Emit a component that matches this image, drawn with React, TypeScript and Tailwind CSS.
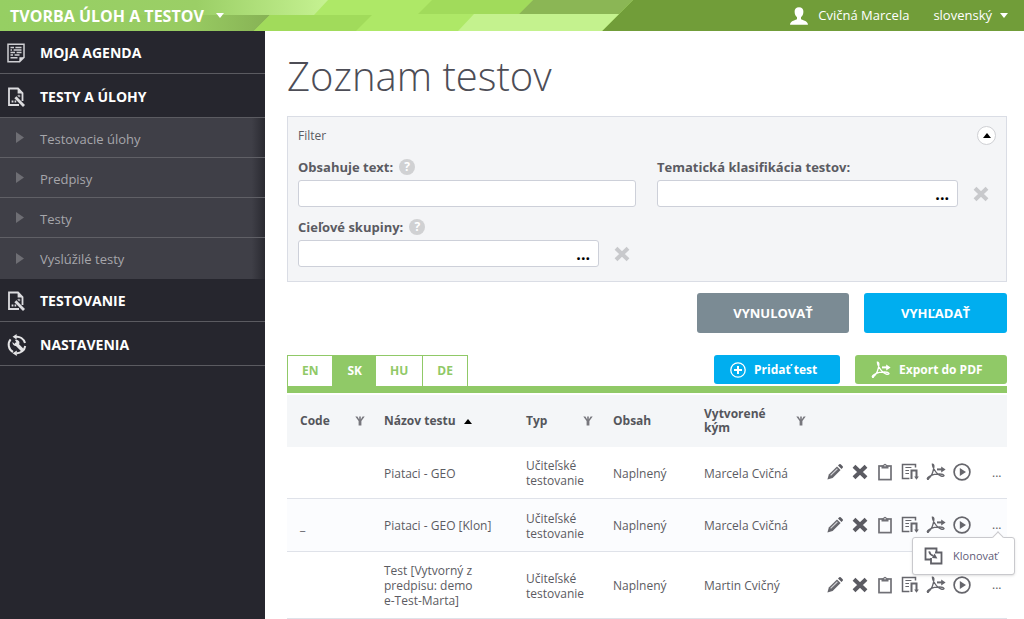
import type { ReactNode } from 'react';

type IconProps = { className?: string };

const PencilIcon = () => (
  <svg viewBox="0 0 18 18" className="size-[18px]" fill="none">
    <path d="M1.4 16.6 L2.8 11.4 L11 3.4 L14.6 7 L6.6 15 Z" fill="#66666c" />
    <path d="M4.6 12.4 L11.4 5.8" stroke="#d0d0d4" strokeWidth="1.2" />
    <path d="M12 2.5 L13.3 1.2 Q14 0.7 14.7 1.3 L16.7 3.3 Q17.3 4 16.7 4.7 L15.5 6 Z" fill="#5b5b62" />
  </svg>
);

const CrossIcon = ({ className }: IconProps) => (
  <svg viewBox="0 0 18 18" className={className} fill="none" stroke="currentColor" strokeWidth="4">
    <path d="M3 3.2 L15 14.8 M15 3.2 L3 14.8" />
  </svg>
);

const ClipboardIcon = () => (
  <svg viewBox="0 0 18 18" className="size-[18px]" fill="none" stroke="#707076">
    <rect x="3" y="3" width="12" height="13.6" strokeWidth="1.7" />
    <path d="M5.5 2.5 H7.2 Q7.4 0.8 9 0.8 Q10.6 0.8 10.8 2.5 H12.5 V5.6 H5.5 Z" fill="#707076" stroke="none" />
    <circle cx="9" cy="2.7" r="0.7" fill="#fff" stroke="none" />
  </svg>
);

const ReportIcon = () => (
  <svg viewBox="0 0 18 18" className="size-[18px]" fill="none" stroke="#66666c" strokeWidth="1.5">
    <path d="M8.4 15.5 H1.5 V1.5 H14.5 V4.6" />
    <path d="M4.4 4.5 H10.4 M4.4 7.5 H8 M4.4 10.5 H8" strokeWidth="1.2" />
    <path d="M10.5 16 V7.5 H15.5 V14.6" strokeWidth="2" />
    <path d="M13.2 13.4 L15.5 16.8 L17.8 13.4 Z" fill="#66666c" stroke="none" />
  </svg>
);

const PdfIcon = ({ className }: IconProps) => (
  <svg viewBox="0 0 20 18" className={className} fill="none" stroke="currentColor" strokeWidth="1.3">
    <path d="M6.4 1.2 C8.6 1 7.8 4.6 7.5 6.5 C6.6 10.4 4.2 14.8 1.6 16.2 C0.6 15 3.6 12.4 8.4 11.4 C12.8 10.6 17.4 11 18 12.6 C17 14.4 12.8 12.6 10.4 9.6 C8.4 7 6.4 3.4 6.4 1.2 Z" />
    <circle cx="2" cy="15.8" r="1.2" fill="currentColor" stroke="none" />
    <path d="M11 6.4 H16" strokeWidth="2" />
    <path d="M15.2 3.4 L19.6 6.4 L15.2 9.4 Z" fill="currentColor" stroke="none" />
  </svg>
);

const PlayIcon = () => (
  <svg viewBox="0 0 18 18" className="size-[18px]" fill="none">
    <circle cx="9" cy="9" r="7.9" stroke="#66666c" strokeWidth="1.7" />
    <path d="M6.8 5 L13 9 L6.8 13 Z" fill="#66666c" />
  </svg>
);

const CloneIcon = () => (
  <svg viewBox="0 0 19 18" className="h-[18px] w-[19px] shrink-0" fill="none" stroke="#606067" strokeWidth="1.8">
    <path d="M7 12.5 H1.5 V1.5 H12.5 V5" />
    <path d="M11 5.5 H17.5 V16.5 H7 V11" />
    <path d="M5.2 4.4 Q5.8 7.8 9.4 8.8" strokeWidth="1.8" />
    <path d="M10.6 6.6 L13.4 11.4 L8 11 Z" fill="#606067" stroke="none" />
  </svg>
);

const FunnelIcon = () => (
  <svg viewBox="0 0 10 10" className="size-2.5 shrink-0" fill="none">
    <path d="M0.3 0.5 L3.6 5 V9.6 H6.4 V5 L9.7 0.5 H7.6 L5.8 3.4 V0.5 H4.2 V3.4 L2.4 0.5 Z" fill="#77777d" />
  </svg>
);

const AgendaIcon = () => (
  <svg viewBox="0 0 18 20" className="h-5 w-[18px]" fill="none" stroke="#cfcfd3">
    <path d="M1 1.2 H17 V14.4 L12.6 18.8 H1 Z" strokeWidth="1.5" />
    <path d="M17 14.2 H12.4 V18.8 Z" fill="#dcdcdf" stroke="none" />
    <path d="M3.5 4.5 H7 M8.4 4.5 H14.5 M3.5 7 H5 M6.6 7 H14.5 M3.5 9.6 H8 M9.6 9.6 H14.5 M3.5 12.1 H6 M7.6 12.1 H12.5 M3.5 14.8 H10.5" strokeWidth="1.5" />
  </svg>
);

const TestIcon = () => (
  <svg viewBox="0 0 18 20" className="h-5 w-[18px]" fill="none" stroke="#dcdcdf">
    <path d="M12 18 H2 V1.5 H11 L15.5 6 V14" strokeWidth="1.8" />
    <path d="M10.6 1 L16 6.6 H10.6 Z" fill="#dcdcdf" stroke="none" />
    <path d="M8.4 10.2 L17 19" strokeWidth="2.8" />
    <path d="M10.2 8.8 L12 7.4 L13.6 9 L12.2 10.6 Z" fill="#a9a9ae" stroke="none" />
    <path d="M4.6 14.6 H6.4 M7.6 14.6 H9.2" strokeWidth="2" />
  </svg>
);

const SettingsIcon = () => (
  <svg viewBox="0 0 20 22" className="h-[22px] w-5" fill="none" stroke="#e4e4e6" strokeWidth="2">
    <path d="M6 18 A8.3 8.3 0 0 1 3.6 5.4" />
    <path d="M8.4 2.8 A8.3 8.3 0 0 1 18 9" />
    <path d="M18.2 12 A8.3 8.3 0 0 1 9.4 19.2" />
    <path d="M9.6 0 V5.6 L5.6 2.8 Z M9.8 16.4 V22 L5.6 19.2 Z" fill="#e4e4e6" stroke="none" />
    <path d="M14.6 15.2 L9.4 10" strokeWidth="3.4" strokeLinecap="round" />
    <path d="M5.4 8 L7.8 10 L9.6 8.4 L7.8 5.8 C11.6 5.2 13.4 8 12 10.6 C9.8 13.2 5.4 12.2 5.4 8 Z" fill="#e4e4e6" stroke="none" />
  </svg>
);

const UserIcon = () => (
  <svg viewBox="0 0 18 18" className="size-[18px]" fill="#fff">
    <path d="M9 0.2 C6.2 0.2 4.4 2 4.6 4.8 C4.7 7.6 5.8 9.2 7 10.2 V12 C6.4 13.4 0.2 13.2 0 17.8 H18 C17.8 13.2 11.6 13.4 11 12 V10.2 C12.2 9.2 13.3 7.6 13.4 4.8 C13.6 2 11.8 0.2 9 0.2 Z" />
  </svg>
);

const CaretDown = () => (
  <svg viewBox="0 0 8 5" className="h-[5px] w-2 shrink-0" fill="#fff">
    <path d="M0 0 H8 L4 5 Z" />
  </svg>
);

const CaretUp = () => (
  <svg viewBox="0 0 8 5" className="h-[5px] w-2 shrink-0" fill="#000">
    <path d="M0 5 H8 L4 0 Z" />
  </svg>
);

const HelpIcon = () => (
  <span className="flex size-4 items-center justify-center rounded-full bg-[#d0d1d3] text-xs leading-4 font-bold text-white">?</span>
);

const submenu = ['Testovacie úlohy', 'Predpisy', 'Testy', 'Vyslúžilé testy'];

const languages = ['EN', 'SK', 'HU', 'DE'];

const tests = [
  { id: 1, code: '', name: 'Piataci - GEO', author: 'Marcela Cvičná', height: 'h-[51px]', bg: 'bg-white', menu: false },
  { id: 2, code: '_', name: 'Piataci - GEO [Klon]', author: 'Marcela Cvičná', height: 'h-[53px]', bg: 'bg-[#fbfcfe]', menu: true },
  { id: 3, code: '', name: 'Test [Vytvorný z\npredpisu: demo\ne-Test-Marta]', author: 'Martin Cvičný', height: 'h-[67px]', bg: 'bg-white', menu: false },
];

const actions = [
  { label: 'Upraviť', icon: <PencilIcon /> },
  { label: 'Zmazať', icon: <CrossIcon className="size-[18px] text-[#5b5b62]" /> },
  { label: 'Zadanie', icon: <ClipboardIcon /> },
  { label: 'Detail', icon: <ReportIcon /> },
  { label: 'Export do PDF', icon: <PdfIcon className="h-[18px] w-5 text-[#66666c]" /> },
  { label: 'Spustiť', icon: <PlayIcon /> },
];

function Header() {
  return (
    <header className="relative flex h-[31px] items-center justify-between bg-[#719d39] pr-4 pl-2.5 text-white">
      <svg viewBox="0 0 634 31" className="absolute top-0 left-0 h-[31px] w-[634px]" aria-hidden="true">
        <defs>
          <linearGradient id="top" x1="0" x2="1" y1="0" y2="0">
            <stop offset="0" stopColor="#96cf63" />
            <stop offset="0.6" stopColor="#9bcf66" />
            <stop offset="1" stopColor="#c6f292" />
          </linearGradient>
          <linearGradient id="bottom" x1="0" x2="1" y1="0" y2="0">
            <stop offset="0" stopColor="#96cf63" />
            <stop offset="0.7" stopColor="#98cb62" />
            <stop offset="1" stopColor="#87b255" />
          </linearGradient>
        </defs>
        <path d="M0 0 H633 L602 31 H0 Z" fill="#aee867" />
        <path d="M0 0 H328 L314 15 H0 Z" fill="url(#top)" />
        <path d="M0 15 H270 L254 31 H0 Z" fill="url(#bottom)" />
        <path d="M270 15 H372 L356 31 H254 Z" fill="#a1db5b" />
        <path d="M432 0 H533 L519 14 H418 Z" fill="#a1db5b" />
        <path d="M533 0 H633 L619 14 H519 Z" fill="#8bb655" />
        <path d="M474 14 H619 L602 31 H458 Z" fill="#c4f28e" />
      </svg>
      <button type="button" className="relative flex items-center gap-3 text-base font-bold">
        TVORBA ÚLOH A TESTOV <CaretDown />
      </button>
      <div className="flex items-center text-[13px]">
        <a href="#" className="flex items-center gap-2.5">
          <UserIcon /> Cvičná Marcela
        </a>
        <button type="button" className="ml-6 flex items-center gap-2">
          slovenský <CaretDown />
        </button>
      </div>
    </header>
  );
}

function MenuItem({ icon, label, className }: { icon: ReactNode; label: string; className: string }) {
  return (
    <a href="#" className={`flex items-center border-b border-[#5b5b61] pt-0.5 pl-[7px] text-sm font-bold text-white ${className}`}>
      <span className="flex w-[33px]">{icon}</span>
      {label}
    </a>
  );
}

function Sidebar() {
  return (
    <nav className="w-[265px] shrink-0 bg-[#26262e]">
      <MenuItem icon={<AgendaIcon />} label="MOJA AGENDA" className="h-[43px]" />
      <MenuItem icon={<TestIcon />} label="TESTY A ÚLOHY" className="h-11" />
      <ul className="divide-y divide-[#606066] bg-linear-to-r from-[#3f3f47] from-95% to-[#2a2a31] pb-px">
        {submenu.map((item) => (
          <li key={item} className="h-10">
            <a href="#" className="flex h-full items-center pl-4 text-[13px] text-[#a6a6ab]">
              <svg viewBox="0 0 8 11" className="mr-4 h-[11px] w-2" fill="#6e6e74">
                <path d="M0 0 L8 5.5 L0 11 Z" />
              </svg>
              <span className="pt-1">{item}</span>
            </a>
          </li>
        ))}
      </ul>
      <MenuItem icon={<TestIcon />} label="TESTOVANIE" className="h-[43px]" />
      <MenuItem icon={<SettingsIcon />} label="NASTAVENIA" className="h-11" />
    </nav>
  );
}

function PickerField({ id }: { id: string }) {
  return (
    <div className="flex items-center">
      <div className="flex h-[27px] flex-1 items-center rounded-[3px] border border-[#cdd0d9] bg-white">
        <input id={id} type="text" className="h-full min-w-0 flex-1 px-2 outline-none" />
        <button type="button" aria-label="Vybrať" className="px-2 text-base leading-4 font-bold text-black">...</button>
      </div>
      <button type="button" aria-label="Vymazať" className="ml-3.5">
        <CrossIcon className="size-[18px] text-[#c8c9cc]" />
      </button>
    </div>
  );
}

function Filter() {
  return (
    <section className="h-[166px] border border-[#dadde5] bg-[#f4f5f7] pl-2.5">
      <div className="flex h-[37px] items-center justify-between pr-2.5">
        <h2>Filter</h2>
        <button type="button" aria-label="Zbaliť filter" className="flex size-[19px] items-center justify-center rounded-full border border-[#cfd0d4] bg-white">
          <CaretUp />
        </button>
      </div>
      <div className="grid grid-cols-[1fr_349px] text-[13px]">
        <div className="h-[60px] pr-[21px]">
          <div className="flex h-[26px] items-center gap-1.5">
            <label htmlFor="text" className="pt-0.5 font-bold">Obsahuje text:</label>
            <HelpIcon />
          </div>
          <input id="text" type="text" className="block h-[27px] w-full rounded-[3px] border border-[#cdd0d9] bg-white px-2 outline-none" />
        </div>
        <div className="h-[60px] pr-4">
          <div className="flex h-[26px] items-center">
            <label htmlFor="classification" className="pt-0.5 font-bold">Tematická klasifikácia testov:</label>
          </div>
          <PickerField id="classification" />
        </div>
        <div className="h-[60px] pr-[26px]">
          <div className="flex h-[26px] items-center gap-1.5">
            <label htmlFor="groups" className="pt-0.5 font-bold">Cieľové skupiny:</label>
            <HelpIcon />
          </div>
          <PickerField id="groups" />
        </div>
      </div>
    </section>
  );
}

function Toolbar() {
  return (
    <div className="mt-[22px] flex items-start justify-between border-b-[7px] border-[#90c967]">
      <div className="flex h-[31px] border-t border-l border-[#90c967] font-bold">
        {languages.map((lang) => (
          <button
            key={lang}
            type="button"
            className={`px-3.5 ${lang === 'SK' ? 'bg-[#90c967] text-white' : 'border-r border-[#90c967] bg-white text-[#90c967]'}`}
          >
            {lang}
          </button>
        ))}
      </div>
      <div className="flex gap-[15px] font-bold text-white">
        <button type="button" className="flex h-[29px] w-[126px] items-center gap-2 rounded-[3px] bg-[#00aeef] pl-4">
          <svg viewBox="0 0 16 16" className="size-4" fill="none" stroke="#fff">
            <circle cx="8" cy="8" r="7.2" strokeWidth="1.3" />
            <path d="M8 4 V12 M4 8 H12" strokeWidth="2" />
          </svg>
          Pridať test
        </button>
        <button type="button" className="flex h-[29px] w-[152px] items-center gap-2 rounded-[3px] bg-[#90c967] pl-4">
          <PdfIcon className="h-[18px] w-5" />
          Export do PDF
        </button>
      </div>
    </div>
  );
}

function TestTable() {
  return (
    <table className="mt-0.5 w-full table-fixed text-left">
      <colgroup>
        <col className="w-[84px]" />
        <col />
        <col className="w-[87px]" />
        <col className="w-[91px]" />
        <col className="w-[123px]" />
        <col className="w-[165px]" />
        <col className="w-7" />
      </colgroup>
      <thead>
        <tr className="h-[52px] bg-[#f4f6f8] text-[#55565c]">
          <th className="pl-[13px]">
            <div className="flex items-center justify-between pr-1.5">Code <FunnelIcon /></div>
          </th>
          <th className="pl-[13px]">
            <div className="flex items-center gap-2">Názov testu <CaretUp /></div>
          </th>
          <th className="pl-[13px]">
            <div className="flex items-center justify-between pr-[7px]">Typ <FunnelIcon /></div>
          </th>
          <th className="pl-[13px]">Obsah</th>
          <th className="pl-[13px]">
            <div className="flex items-center justify-between pr-2 leading-[14px]">
              <span className="w-16">Vytvorené kým</span> <FunnelIcon />
            </div>
          </th>
          <th />
          <th />
        </tr>
      </thead>
      <tbody className="leading-[15px]">
        {tests.map((test) => (
          <tr key={test.id} className={`border-b border-[#dfe2e9] ${test.height} ${test.bg}`}>
            <td className="pt-0.5 pl-[13px]">{test.code}</td>
            <td className="pt-0.5 pr-2 pl-[13px] whitespace-pre-line">{test.name}</td>
            <td className="pt-0.5 pl-[13px]">Učiteľské testovanie</td>
            <td className="pt-0.5 pl-[13px]">Naplnený</td>
            <td className="pt-0.5 pl-[13px]">{test.author}</td>
            <td className="pl-3">
              <div className="flex items-center gap-[7px]">
                {actions.map((action) => (
                  <button key={action.label} type="button" aria-label={action.label}>
                    {action.icon}
                  </button>
                ))}
              </div>
            </td>
            <td className="relative pl-[13px]">
              <button type="button" aria-label="Viac">...</button>
              {test.menu && (
                <div className="absolute top-[38px] -right-2 z-10 w-[103px] rounded-[3px] border border-[#c9c9cd] bg-white shadow">
                  <span className="absolute -top-[5px] right-3 size-2 rotate-45 border-t border-l border-[#c9c9cd] bg-white" />
                  <button type="button" className="flex h-9 w-full items-center gap-2.5 pl-[11px] text-[11px] text-[#5f5c78]">
                    <CloneIcon /> Klonovať
                  </button>
                </div>
              )}
            </td>
          </tr>
        ))}
      </tbody>
    </table>
  );
}

export default function App() {
  return (
    <div className="flex min-h-screen flex-col bg-white font-['Open_Sans','Noto_Sans',sans-serif]">
      <Header />
      <div className="flex flex-1">
        <Sidebar />
        <main className="min-w-0 flex-1 pr-[17px] pl-[22px] text-xs text-[#5b5b62]">
          <h1 className="flex h-[85px] items-center pt-1 text-[40px] font-light text-[#4d4d56]">Zoznam testov</h1>
          <Filter />
          <div className="mt-[11px] flex justify-end gap-[15px] text-[13px] font-bold text-white">
            <button type="reset" className="h-10 w-[152px] rounded-[3px] bg-[#7b8b94] pt-0.5">VYNULOVAŤ</button>
            <button type="submit" className="h-10 w-[143px] rounded-[3px] bg-[#00aeef] pt-0.5">VYHĽADAŤ</button>
          </div>
          <Toolbar />
          <TestTable />
        </main>
      </div>
    </div>
  );
}
